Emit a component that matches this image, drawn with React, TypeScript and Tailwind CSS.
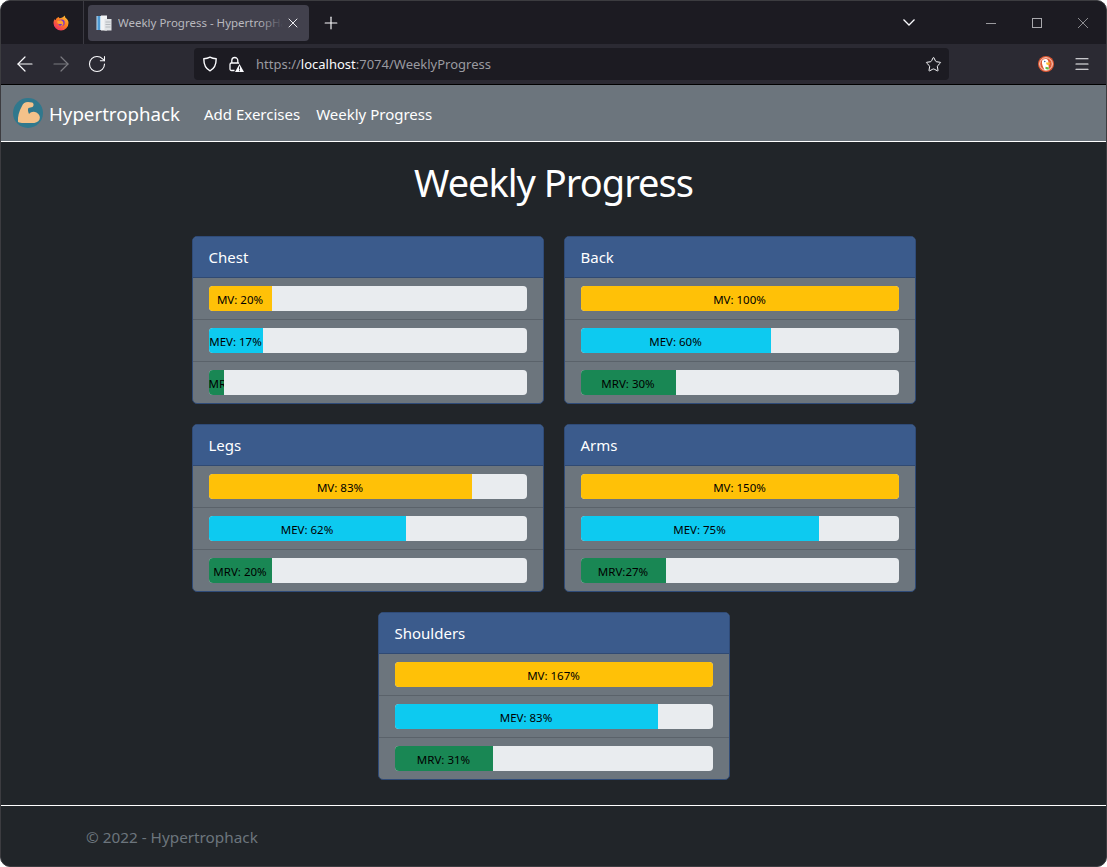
import { ArrowLeft, ArrowRight, Menu, Plus, RotateCw, Star, X } from "lucide-react";

const sans = "font-['Noto_Sans','Open_Sans',sans-serif]";

type Bar = { label: string; width: number; tone: "mv" | "mev" | "mrv" };

const tones = {
  mv: "bg-[#ffc107]",
  mev: "bg-[#0dcaf0]",
  mrv: "bg-[#198754]",
};

const groups: { name: string; bars: Bar[] }[] = [
  {
    name: "Chest",
    bars: [
      { label: "MV: 20%", width: 63, tone: "mv" },
      { label: "MEV: 17%", width: 54, tone: "mev" },
      { label: "MRV: 5%", width: 15, tone: "mrv" },
    ],
  },
  {
    name: "Back",
    bars: [
      { label: "MV: 100%", width: 318, tone: "mv" },
      { label: "MEV: 60%", width: 190, tone: "mev" },
      { label: "MRV: 30%", width: 95, tone: "mrv" },
    ],
  },
  {
    name: "Legs",
    bars: [
      { label: "MV: 83%", width: 263, tone: "mv" },
      { label: "MEV: 62%", width: 197, tone: "mev" },
      { label: "MRV: 20%", width: 63, tone: "mrv" },
    ],
  },
  {
    name: "Arms",
    bars: [
      { label: "MV: 150%", width: 318, tone: "mv" },
      { label: "MEV: 75%", width: 238, tone: "mev" },
      { label: "MRV:27%", width: 85, tone: "mrv" },
    ],
  },
  {
    name: "Shoulders",
    bars: [
      { label: "MV: 167%", width: 318, tone: "mv" },
      { label: "MEV: 83%", width: 263, tone: "mev" },
      { label: "MRV: 31%", width: 98, tone: "mrv" },
    ],
  },
];

function Firefox() {
  return (
    <svg width="16" height="16" viewBox="0 0 16 16">
      <defs>
        <linearGradient id="ff" x1="1" y1="0" x2="0.200" y2="1">
          <stop offset="0" stopColor="#ffd23b" />
          <stop offset="0.5" stopColor="#ff7a1f" />
          <stop offset="1" stopColor="#ee2a6b" />
        </linearGradient>
      </defs>
      <path d="M11.5 0.5c.6 1 .6 1.8 1.2 2.6C14.600 4.400 15.500 6 15.500 8a7.500 7.500 0 0 1-15 0c0-1.600.5-3 1.300-4.100.1.700.4 1.100.8 1.400C3 3.600 4.400 2.300 6 2c-.1.500.1 1 .5 1.300 1.800-.3 3.800-.8 5-2.800z" fill="url(#ff)" />
      <circle cx="8.500" cy="7.800" r="3.200" fill="#7b2fc9" />
      <path d="M4 7c.8-1.500 2.500-2.200 4-1.700 1.300.5 2.800 1.800 2.400 3.800-.4 1.600-2 2.500-3.400 2 1.200-.2 2-1 1.900-2H6.200C5.300 9 4.500 8.200 4 7z" fill="#ffa02e" />
    </svg>
  );
}

function PageIcon() {
  return (
    <svg width="16" height="16" viewBox="0 0 16 16">
      <rect x="0.500" y="1" width="6" height="14" fill="#c5e0f3" />
      <rect x="1.500" y="1" width="2.500" height="14" fill="#4d9ad4" />
      <rect x="5" y="0.500" width="6" height="15" fill="#f1f3f5" />
      <rect x="8.500" y="4" width="7" height="11.500" fill="#dfe2e5" />
      <path d="M9.500 7h5M9.500 9.500h5M9.500 12h5" stroke="#b4b9be" />
    </svg>
  );
}

function Shield() {
  return (
    <svg width="16" height="16" viewBox="0 0 16 16" fill="none" stroke="#fbfbfe" strokeWidth="1.400">
      <path d="M8 1.200c2 1.100 4 1.500 6.200 1.600 0 5.200-1.200 9.700-6.200 12-5-2.300-6.200-6.800-6.200-12C4 2.700 6 2.300 8 1.200z" strokeLinejoin="round" />
    </svg>
  );
}

function LockWarning() {
  return (
    <svg width="16" height="16" viewBox="0 0 16 16">
      <path d="M3.800 7V4.500a3 3 0 0 1 6 0V7" fill="none" stroke="#fbfbfe" strokeWidth="1.300" />
      <path d="M6.500 14.500H3.500A1.500 1.500 0 0 1 2 13V8.500A1.500 1.500 0 0 1 3.500 7h6.500a1.500 1.500 0 0 1 1 .4" fill="none" stroke="#fbfbfe" strokeWidth="1.300" />
      <path d="M11.500 8l4.500 8H7z" fill="#fbfbfe" />
      <path d="M11.500 10.500v3M11.500 14.200v1" stroke="#2b2a33" strokeWidth="1" />
    </svg>
  );
}

function DuckIcon() {
  return (
    <svg width="16" height="16" viewBox="0 0 16 16">
      <circle cx="8" cy="8" r="8" fill="#de5833" />
      <circle cx="8" cy="8" r="6.300" fill="none" stroke="#f7d8cd" strokeWidth="1" />
      <path d="M4 5c.8-2.300 5-2.800 6-.5.8 1.500.4 3.500.6 5.500.1 1.600.4 3 .4 4H6.500C5 11 3.500 8 4 5z" fill="#fff" />
      <path d="M8 6.500h4.500L11 9.200 8.500 8.500z" fill="#fdb92e" />
      <path d="M7.500 10.800l3.500.6-.5 2.300-3-.6z" fill="#65bc46" />
      <circle cx="6.800" cy="5.500" r="0.700" fill="#2d4f8e" />
    </svg>
  );
}

function BrandLogo() {
  return (
    <svg width="30" height="30" viewBox="0 0 30 30" className="shrink-0">
      <circle cx="15" cy="15" r="15" fill="#30788d" />
      <path d="M5 24C4.500 19 6 13 9 8c1-2.500 3-4 6-4l4 .5c2 .5 2 3.500.5 4.500l-4 1c-1 1-.5 4 .5 6 2-2.500 5-3 7.500-1.500 3 1.500 4 4.500 3 7-1.500 3-5.500 4-9.500 3.500-4-.5-8 1-12-1z" fill="#f4c28a" />
    </svg>
  );
}

function WindowControls() {
  return (
    <div className="ml-auto flex items-center">
      <svg width="12" height="7" viewBox="0 0 12 7" fill="none" stroke="#fbfbfe" strokeWidth="1.300" className="mr-[71px]">
        <path d="M0.500 0.500L6 6l5.500-5.500" />
      </svg>
      <svg width="10" height="10" viewBox="0 0 10 10" stroke="#9a9a9e" className="mr-[36px]">
        <path d="M0 5.500h10" />
      </svg>
      <svg width="10" height="10" viewBox="0 0 10 10" fill="none" stroke="#a8a8ac" className="mr-[36px]">
        <rect x="0.500" y="0.500" width="9" height="9" />
      </svg>
      <svg width="10" height="10" viewBox="0 0 10 10" stroke="#8c8c90" className="mr-[18px]">
        <path d="M0 0l10 10M10 0L0 10" />
      </svg>
    </div>
  );
}

function ProgressBar({ bar }: { bar: Bar }) {
  return (
    <div className="flex h-[25px] w-full overflow-hidden rounded-[4px] bg-[#e9ecef]">
      <div
        className={`flex shrink-0 flex-col justify-center overflow-hidden whitespace-nowrap pt-[2px] text-center text-[11.5px] leading-none text-black ${tones[bar.tone]}`}
        style={{ width: bar.width }}
      >
        {bar.label}
      </div>
    </div>
  );
}

function MuscleCard({ name, bars }: { name: string; bars: Bar[] }) {
  return (
    <div className="w-[352px] overflow-hidden rounded-[5px] border border-[#2f4b78] bg-[#6c757d]">
      <div className="flex h-[41px] items-center border-b border-[#304a73] bg-[#3b5b8c] px-4 pt-[1px] text-[15px] text-white">{name}</div>
      {bars.map((bar, i) => (
        <div key={bar.label} className={`flex items-center px-4 ${i > 0 ? "h-[42px] border-t border-[#5a626a]" : "h-[41px]"}`}>
          <ProgressBar bar={bar} />
        </div>
      ))}
    </div>
  );
}

function App() {
  return (
    <div className={`flex h-[867px] w-[1107px] flex-col overflow-hidden rounded-[10px] border border-[#3c3c40] bg-[#212529] ${sans}`}>
      {/* tab strip */}
      <div className="flex h-[43px] shrink-0 items-center bg-[#1c1b22]">
        <div className="flex h-full w-[83px] items-center justify-end border-r border-[#3b3a42] pr-[14px]">
          <Firefox />
        </div>
        <div className="ml-[4px] flex h-[36px] w-[221px] items-center rounded-[4px] bg-[#42414d] pl-[8px] pr-[8px] text-[11.5px] text-[#b9b9bf]">
          <PageIcon />
          <span className="relative ml-[6px] w-[165px] overflow-hidden whitespace-nowrap">
            Weekly Progress - HypertropHack
            <span className="absolute inset-y-0 right-0 w-[24px] bg-gradient-to-r from-transparent to-[#42414d]" />
          </span>
          <X size={16} color="#fbfbfe" strokeWidth={1.400} className="ml-auto" />
        </div>
        <Plus size={20} color="#fbfbfe" strokeWidth={1.400} className="ml-[12px]" />
        <WindowControls />
      </div>
      {/* toolbar */}
      <div className="flex h-[41px] shrink-0 items-center border-b border-black bg-[#2b2a33]">
        <ArrowLeft size={24} color="#fbfbfe" strokeWidth={1.200} className="ml-[12px]" />
        <ArrowRight size={24} color="#7a7a80" strokeWidth={1.200} className="ml-[12px]" />
        <RotateCw size={20} color="#fbfbfe" strokeWidth={1.300} className="ml-[14px]" />
        <div className="ml-[87px] flex h-[32px] w-[755px] items-center rounded-[4px] bg-[#1c1b22] pl-[8px] pr-[7px] text-[13px]">
          <Shield />
          <span className="ml-[10px]"><LockWarning /></span>
          <span className="ml-[12px] whitespace-nowrap pt-[2px] text-[#9a9aa0]">
            https://<span className="text-[#fbfbfe]">localhost</span>:7074/WeeklyProgress
          </span>
          <Star size={17} color="#fbfbfe" strokeWidth={1.400} className="ml-auto" />
        </div>
        <div className="ml-[89px]"><DuckIcon /></div>
        <Menu size={18} color="#fbfbfe" strokeWidth={1.600} className="ml-[19px]" />
      </div>
      {/* navbar */}
      <nav className="flex h-[57px] shrink-0 items-center border-b border-white bg-[#6c757d] pl-[12px] text-white">
        <BrandLogo />
        <span className="ml-[6px] pt-[2px] text-[18.7px]">Hypertrophack</span>
        <span className="ml-[24px] pt-[2px] text-[15px]">Add Exercises</span>
        <span className="ml-[16px] pt-[2px] text-[15px]">Weekly Progress</span>
      </nav>
      {/* page */}
      <main className="flex flex-1 flex-col items-center">
        <h1 className="mt-[14px] text-[38px] font-normal leading-[52px] tracking-[-1px] text-white">Weekly Progress</h1>
        <div className="mt-[28px] flex w-[724px] flex-wrap justify-center gap-[20px]">
          {groups.map((g) => (
            <MuscleCard key={g.name} name={g.name} bars={g.bars} />
          ))}
        </div>
      </main>
      <footer className="flex h-[61px] shrink-0 items-start border-t border-white pl-[85px] pt-[20px] text-[15.300px] text-[#6c757d]">
        © 2022 - Hypertrophack
      </footer>
    </div>
  );
}

export default App;
